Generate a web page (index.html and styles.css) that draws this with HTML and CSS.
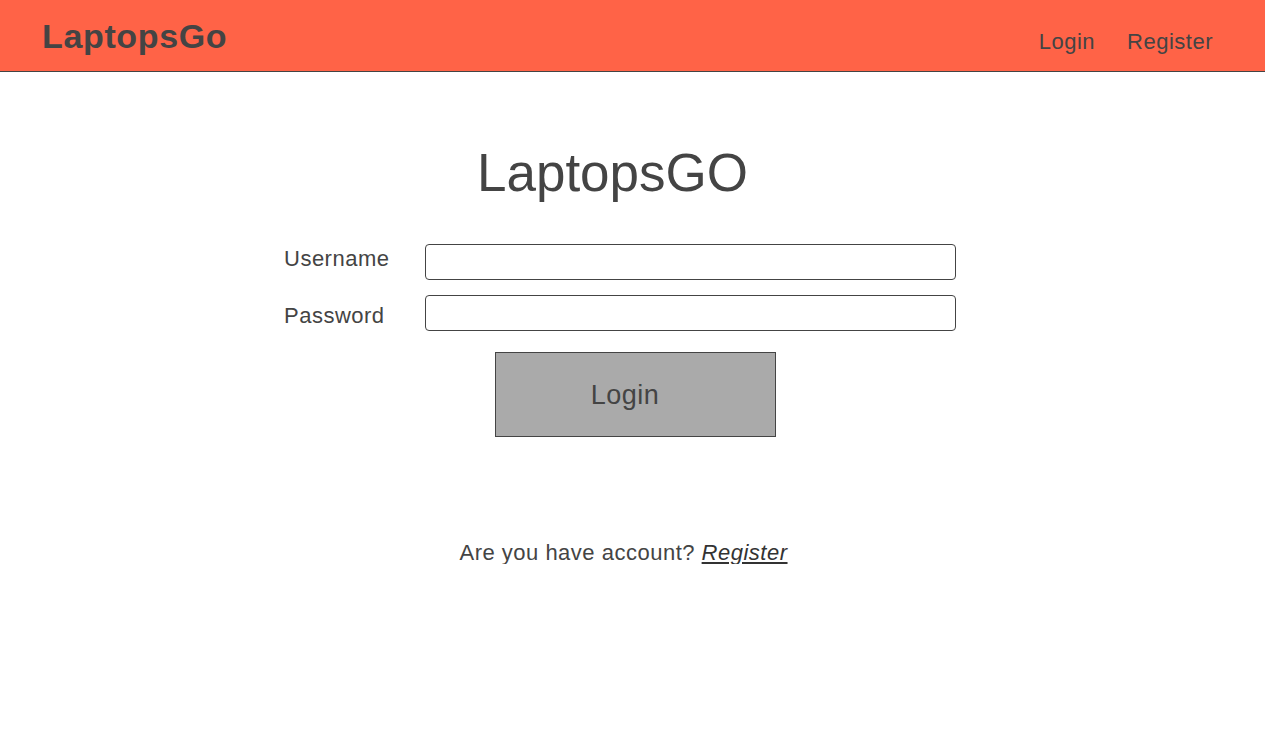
FILE: index.html
```
<!DOCTYPE html>
<html lang="en">
<head>
<meta charset="utf-8">
<title>LaptopsGo - Login</title>
<link rel="stylesheet" href="styles.css">
</head>
<body>
<header class="topbar">
  <a class="brand" href="#">LaptopsGo</a>
  <nav class="nav">
    <a href="#">Login</a>
    <a href="#">Register</a>
  </nav>
</header>
<main class="main">
  <h1 class="title">LaptopsGO</h1>
  <form class="form">
    <div class="labels">
      <label for="u">Username</label>
      <label for="p">Password</label>
    </div>
    <div class="inputs">
      <input id="u" type="text">
      <input id="p" type="password">
    </div>
  </form>
  <button class="btn" type="button">Login</button>
  <p class="foot">Are you have account? <a href="#">Register</a></p>
</main>
</body>
</html>
```

FILE: styles.css
```
* { box-sizing: border-box; }
html, body { margin: 0; padding: 0; }
body {
  font-family: "Liberation Sans", Arial, sans-serif;
  color: #444;
  background: #fff;
}
a { color: inherit; text-decoration: none; }

.topbar {
  height: 72px;
  background: #ff6347;
  border-bottom: 1px solid #444;
  display: flex;
  justify-content: space-between;
  align-items: flex-start;
  padding: 0 52px 0 42px;
}
.brand {
  font-size: 34px;
  font-weight: bold;
  line-height: 1;
  letter-spacing: 0.65px;
  margin-top: 19px;
}
.nav {
  display: flex;
  gap: 32px;
  margin-top: 31px;
}
.nav a {
  font-size: 22px;
  line-height: 1;
  letter-spacing: 0.5px;
}

.main {
  display: flex;
  flex-direction: column;
  align-items: center;
}
.title {
  margin: 74px 40px 0 0;
  font-size: 53px;
  font-weight: normal;
  line-height: 1;
}
.form {
  width: 672px;
  margin: 45px 25px 0 0;
  display: flex;
}
.labels {
  width: 141px;
  display: flex;
  flex-direction: column;
  gap: 28px;
}
.labels label {
  font-size: 22px;
  line-height: 29px;
  letter-spacing: 0.5px;
}
.inputs {
  flex: 1;
  display: flex;
  flex-direction: column;
  gap: 15px;
}
.inputs input {
  height: 36px;
  border: 1px solid #444;
  border-radius: 4px;
  font-family: inherit;
  font-size: 18px;
  padding: 0 8px;
  color: #444;
  outline: none;
}
.btn {
  margin: 21px 0 0 5px;
  width: 281px;
  height: 85px;
  background: #aaa;
  border: 1px solid #444;
  color: #444;
  font-family: inherit;
  font-size: 27px;
  letter-spacing: 0.5px;
  padding: 2px 20px 0 0;
}
.foot {
  margin: 105px 18px 0 0;
  font-size: 22px;
  line-height: 1;
  letter-spacing: 0.5px;
}
.foot a {
  font-style: italic;
  text-decoration: underline;
  color: #333;
}
```
